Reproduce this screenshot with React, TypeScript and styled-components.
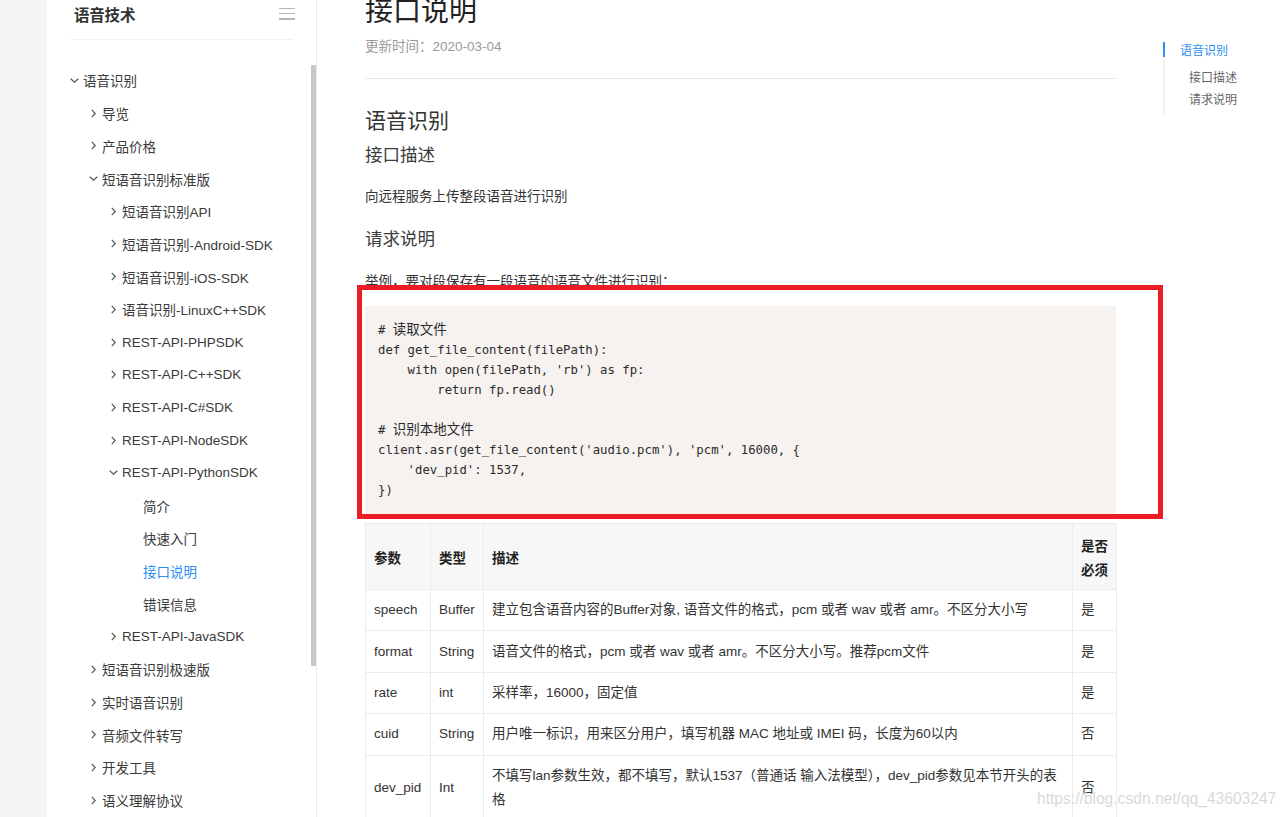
import React from 'react';
import styled, { createGlobalStyle } from 'styled-components';

const GlobalStyle = createGlobalStyle`
  html, body {
    margin: 0;
    padding: 0;
    background: #fff;
  }
  body {
    font-family: "Liberation Sans", "Noto Sans CJK SC", sans-serif;
    color: #333;
  }
  * { box-sizing: border-box; }
`;

type NodeState = 'open' | 'closed' | 'leaf';

interface MenuEntry {
  label: string;
  level: number;
  state: NodeState;
  active?: boolean;
}

const menu: MenuEntry[] = [
  { label: '语音识别', level: 0, state: 'open' },
  { label: '导览', level: 1, state: 'closed' },
  { label: '产品价格', level: 1, state: 'closed' },
  { label: '短语音识别标准版', level: 1, state: 'open' },
  { label: '短语音识别API', level: 2, state: 'closed' },
  { label: '短语音识别-Android-SDK', level: 2, state: 'closed' },
  { label: '短语音识别-iOS-SDK', level: 2, state: 'closed' },
  { label: '语音识别-LinuxC++SDK', level: 2, state: 'closed' },
  { label: 'REST-API-PHPSDK', level: 2, state: 'closed' },
  { label: 'REST-API-C++SDK', level: 2, state: 'closed' },
  { label: 'REST-API-C#SDK', level: 2, state: 'closed' },
  { label: 'REST-API-NodeSDK', level: 2, state: 'closed' },
  { label: 'REST-API-PythonSDK', level: 2, state: 'open' },
  { label: '简介', level: 3, state: 'leaf' },
  { label: '快速入门', level: 3, state: 'leaf' },
  { label: '接口说明', level: 3, state: 'leaf', active: true },
  { label: '错误信息', level: 3, state: 'leaf' },
  { label: 'REST-API-JavaSDK', level: 2, state: 'closed' },
  { label: '短语音识别极速版', level: 1, state: 'closed' },
  { label: '实时语音识别', level: 1, state: 'closed' },
  { label: '音频文件转写', level: 1, state: 'closed' },
  { label: '开发工具', level: 1, state: 'closed' },
  { label: '语义理解协议', level: 1, state: 'closed' },
];

// text start (px from sidebar edge) per level
const textX = [36, 55, 75, 96];

const params = [
  { name: 'speech', type: 'Buffer', desc: '建立包含语音内容的Buffer对象, 语音文件的格式，pcm 或者 wav 或者 amr。不区分大小写', need: '是' },
  { name: 'format', type: 'String', desc: '语音文件的格式，pcm 或者 wav 或者 amr。不区分大小写。推荐pcm文件', need: '是' },
  { name: 'rate', type: 'int', desc: '采样率，16000，固定值', need: '是' },
  { name: 'cuid', type: 'String', desc: '用户唯一标识，用来区分用户，填写机器 MAC 地址或 IMEI 码，长度为60以内', need: '否' },
  { name: 'dev_pid', type: 'Int', desc: '不填写lan参数生效，都不填写，默认1537（普通话 输入法模型），dev_pid参数见本节开头的表格', need: '否' },
];

const Page = styled.div`
  display: flex;
  height: 817px;
  overflow: hidden;
  position: relative;
`;

const Gutter = styled.div`
  width: 47px;
  flex-shrink: 0;
  background: #f5f5f5;
`;

const Sidebar = styled.aside`
  position: relative;
  width: 270px;
  flex-shrink: 0;
  padding: 0 23px;
  border-right: 1px solid #e9ecef;
  background: #fff;
`;

const SideHeader = styled.div`
  height: 40px;
  padding: 0 0 12px 4px;
  display: flex;
  align-items: center;
  justify-content: space-between;
  border-bottom: 1px solid #eef0f2;
`;

const SideTitle = styled.div`
  font-family: "Noto Sans CJK SC", sans-serif;
  font-size: 15.5px;
  font-weight: 700;
  color: #333;
  letter-spacing: -0.2px;
`;

const Burger = styled.div`
  width: 16px;
  height: 12px;
  margin-right: -2px;
  display: flex;
  flex-direction: column;
  justify-content: space-between;
  span {
    display: block;
    height: 1.5px;
    background: #b5b5b5;
  }
`;

const MenuList = styled.ul`
  list-style: none;
  margin: 0 -23px;
  padding: 24px 0 0;
`;

const MenuRow = styled.li<{ $indent: number; $active?: boolean }>`
  height: 32.72px;
  display: flex;
  align-items: center;
  padding-left: ${p => p.$indent}px;
  font-family: "Liberation Sans", "Noto Sans CJK SC", sans-serif;
  font-size: 13.5px;
  white-space: nowrap;
  color: ${p => (p.$active ? '#2e8ff0' : '#3a3a3a')};
`;

const Caret = styled.span`
  width: 10px;
  margin-right: 4px;
  display: inline-flex;
  justify-content: center;
  align-items: center;
`;

const ScrollThumb = styled.div`
  position: absolute;
  right: 0;
  top: 65px;
  width: 5px;
  height: 601px;
  background: #c6c6c6;
  border-radius: 1px;
`;

const Main = styled.main`
  flex: 1;
  display: flex;
  padding-left: 48px;
`;

const Article = styled.article`
  width: 751px;
  flex-shrink: 0;
  font-family: "Liberation Sans", "Noto Sans CJK SC", sans-serif;
`;

const Title = styled.h1`
  margin: -8px 0 0;
  font-family: "Noto Sans CJK SC", sans-serif;
  font-weight: 400;
  font-size: 28px;
  line-height: 34px;
  color: #222;
`;

const Updated = styled.div`
  margin-top: 11px;
  font-size: 13.5px;
  line-height: 20px;
  color: #9a9a9a;
`;

const Rule = styled.hr`
  margin: 21px 0 0;
  border: 0;
  border-top: 1px solid #e4e9ee;
`;

const SectionTitle = styled.h2`
  margin: 25px 0 0;
  font-family: "Noto Sans CJK SC", sans-serif;
  font-weight: 400;
  font-size: 21px;
  line-height: 30px;
  color: #333;
`;

const SubTitle = styled.h3<{ $gap: number }>`
  margin: ${p => p.$gap}px 0 0;
  font-family: "Noto Sans CJK SC", sans-serif;
  font-weight: 400;
  font-size: 17.5px;
  line-height: 26px;
  color: #3c3c3c;
`;

const Para = styled.p<{ $gap: number }>`
  margin: ${p => p.$gap}px 0 0;
  font-size: 13.5px;
  line-height: 20px;
  color: #333;
`;

const CodeWrap = styled.div`
  position: relative;
  margin-top: 14px;
`;

const Code = styled.pre`
  margin: 0;
  padding: 14px 13px;
  background: #f5f2f0;
  font-family: "DejaVu Sans Mono", "Noto Sans CJK SC", monospace;
  font-size: 12.3px;
  line-height: 20px;
  color: #2b2b2b;
`;

const Cjk = styled.span`
  font-family: "Noto Sans CJK SC", sans-serif;
  font-size: 13.5px;
  line-height: 1;
`;

const RedFrame = styled.div`
  position: absolute;
  top: -21px;
  left: -8px;
  right: -47px;
  bottom: -5px;
  border: 5px solid #eb1c26;
  pointer-events: none;
`;

const Table = styled.table`
  margin-top: 9px;
  width: 751px;
  table-layout: fixed;
  border-collapse: collapse;
  font-size: 13.5px;
  color: #333;
  th, td {
    border: 1px solid #ebebeb;
    padding: 8px 8px;
    line-height: 24px;
    text-align: left;
    vertical-align: middle;
  }
  th {
    padding: 8.5px 8px;
    background: #f7f7f7;
    font-family: "Noto Sans CJK SC", sans-serif;
    font-weight: 700;
    color: #222;
  }
  td {
    padding: 8.2px 8px;
  }
`;

const Toc = styled.nav`
  margin: 42px 0 0 47px;
  align-self: flex-start;
  border-left: 2px solid #f1f3f5;
  padding-bottom: 5px;
  font-family: "Noto Sans CJK SC", sans-serif;
  font-size: 12px;
`;

const TocItem = styled.div<{ $sub?: boolean; $active?: boolean }>`
  position: relative;
  padding-left: ${p => (p.$sub ? 24 : 15)}px;
  line-height: ${p => (p.$sub ? 22 : 15)}px;
  color: ${p => (p.$active ? '#2e8ff0' : '#666')};
  white-space: nowrap;
  &:nth-child(2) { margin-top: 9px; }
  ${p => p.$active && `
    &::before {
      content: '';
      position: absolute;
      left: -2px;
      top: 0;
      width: 2px;
      height: 15px;
      background: #2e8ff0;
    }
  `}
`;

const Watermark = styled.div`
  position: absolute;
  left: 1037px;
  top: 790px;
  font-family: "Liberation Sans", sans-serif;
  font-size: 15.6px;
  white-space: nowrap;
  color: rgba(190, 190, 190, 0.6);
  text-shadow: 0 0 1px rgba(255, 255, 255, 0.8);
  pointer-events: none;
`;

const ChevronRight = () => (
  <svg width="5" height="9" viewBox="0 0 5 9">
    <path d="M0.8 0.8 L4.2 4.5 L0.8 8.2" fill="none" stroke="#555" strokeWidth="1.2" />
  </svg>
);

const ChevronDown = () => (
  <svg width="9" height="5" viewBox="0 0 9 5">
    <path d="M0.7 0.7 L4.5 4.2 L8.3 0.7" fill="none" stroke="#555" strokeWidth="1.2" />
  </svg>
);

const code = (
  <>
    {'# '}<Cjk>读取文件</Cjk>{'\n'}
    {'def get_file_content(filePath):\n'}
    {"    with open(filePath, 'rb') as fp:\n"}
    {'        return fp.read()\n'}
    {'\n'}
    {'# '}<Cjk>识别本地文件</Cjk>{'\n'}
    {"client.asr(get_file_content('audio.pcm'), 'pcm', 16000, {\n"}
    {"    'dev_pid': 1537,\n"}
    {'})'}
  </>
);

export default function App() {
  return (
    <Page>
      <GlobalStyle />
      <Gutter />
      <Sidebar>
        <SideHeader>
          <SideTitle>语音技术</SideTitle>
          <Burger>
            <span />
            <span />
            <span />
          </Burger>
        </SideHeader>
        <MenuList>
          {menu.map((m, i) => (
            <MenuRow key={i} $indent={m.state === 'leaf' ? textX[m.level] : textX[m.level] - 14} $active={m.active}>
              {m.state !== 'leaf' && <Caret>{m.state === 'open' ? <ChevronDown /> : <ChevronRight />}</Caret>}
              {m.label}
            </MenuRow>
          ))}
        </MenuList>
        <ScrollThumb />
      </Sidebar>
      <Main>
        <Article>
          <Title>接口说明</Title>
          <Updated>更新时间：2020-03-04</Updated>
          <Rule />
          <SectionTitle>语音识别</SectionTitle>
          <SubTitle $gap={7}>接口描述</SubTitle>
          <Para $gap={20}>向远程服务上传整段语音进行识别</Para>
          <SubTitle $gap={18}>请求说明</SubTitle>
          <Para $gap={21}>举例，要对段保存有一段语音的语音文件进行识别：</Para>
          <CodeWrap>
            <Code>{code}</Code>
            <RedFrame />
          </CodeWrap>
          <Table>
            <colgroup>
              <col style={{ width: 65 }} />
              <col style={{ width: 53 }} />
              <col style={{ width: 589 }} />
              <col style={{ width: 44 }} />
            </colgroup>
            <thead>
              <tr>
                <th>参数</th>
                <th>类型</th>
                <th>描述</th>
                <th>是否必须</th>
              </tr>
            </thead>
            <tbody>
              {params.map(r => (
                <tr key={r.name}>
                  <td>{r.name}</td>
                  <td>{r.type}</td>
                  <td>{r.desc}</td>
                  <td>{r.need}</td>
                </tr>
              ))}
            </tbody>
          </Table>
        </Article>
        <Toc>
          <TocItem $active>语音识别</TocItem>
          <TocItem $sub>接口描述</TocItem>
          <TocItem $sub>请求说明</TocItem>
        </Toc>
      </Main>
      <Watermark>https://blog.csdn.net/qq_43603247</Watermark>
    </Page>
  );
}
